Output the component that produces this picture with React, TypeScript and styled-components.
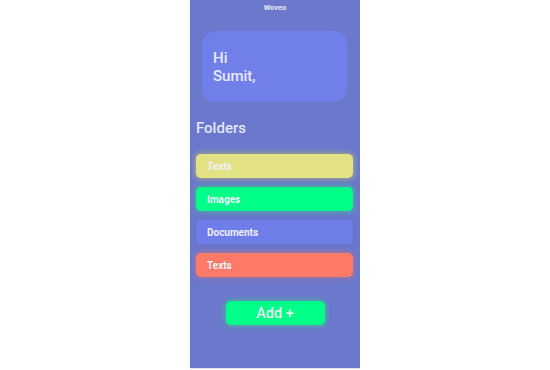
import React, { FC } from "react";
import styled, { createGlobalStyle } from "styled-components";

const GlobalStyle = createGlobalStyle`
    html, body {
        margin: 0;
        padding: 0;
        background: #ffffff;
        font-family: Roboto, "Liberation Sans", sans-serif;
    }
`;

const StyledPage = styled.div`
    display: flex;
    justify-content: center;
    width: 550px;
    height: 370px;
`;

const StyledPhone = styled.div`
    display: flex;
    flex-direction: column;
    width: 170px;
    height: 368px;
    background-color: #6b78cc;
    border-bottom: 1px solid #dfe2f5;
    box-sizing: content-box;
`;

const StyledTitle = styled.div`
    text-align: center;
    font-size: 7.5px;
    font-weight: 700;
    color: #e6e9fa;
    padding-top: 3px;
    height: 9px;
`;

const StyledGreeting = styled.div`
    margin: 19px 13px 0 12px;
    height: 71px;
    border-radius: 13px;
    background-color: #717fe9;
    padding: 18px 11px 0;
    box-sizing: border-box;
    font-size: 15px;
    font-weight: 500;
    line-height: 18px;
    color: #e8ebfb;
`;

const StyledHeading = styled.div`
    margin: 17px 0 0 6px;
    font-size: 15px;
    font-weight: 500;
    color: #e3e6fa;
    height: 20px;
`;

const StyledFolderList = styled.div`
    display: flex;
    flex-direction: column;
    gap: 9px;
    margin: 15px 7px 0 6px;
`;

const StyledFolder = styled.div<{ fill: string; glow: string }>`
    height: 24px;
    border-radius: 5px;
    background-color: ${props => props.fill};
    box-shadow: 0 0 4px 2px ${props => props.glow};
    display: flex;
    align-items: center;
    padding-left: 11px;
    font-size: 10px;
    font-weight: 700;
    color: #eef0fb;
`;

const StyledAddButton = styled.button`
    align-self: center;
    margin-top: 24px;
    width: 99px;
    height: 24px;
    border: none;
    border-radius: 5px;
    background-color: #00ff88;
    box-shadow: 0 0 4px 2px rgba(60, 200, 150, 0.55);
    font-family: inherit;
    font-size: 14.5px;
    font-weight: 500;
    color: #e9f4f2;
    padding: 0;
    cursor: pointer;
`;

const folders = [
    { name: "Texts", fill: "#e2e285", glow: "rgba(170, 175, 130, 0.7)" },
    { name: "Images", fill: "#00ff88", glow: "rgba(60, 190, 150, 0.6)" },
    { name: "Documents", fill: "#6f7de8", glow: "rgba(100, 110, 200, 0.6)" },
    { name: "Texts", fill: "#ff7a68", glow: "rgba(175, 115, 150, 0.7)" },
];

const App: FC = () => {
    return (
        <>
            <GlobalStyle />
            <StyledPage>
                <StyledPhone>
                    <StyledTitle>Woveo</StyledTitle>
                    <StyledGreeting>Hi<br />Sumit,</StyledGreeting>
                    <StyledHeading>Folders</StyledHeading>
                    <StyledFolderList>
                        {folders.map((f, id) => (
                            <StyledFolder key={id} fill={f.fill} glow={f.glow}>{f.name}</StyledFolder>
                        ))}
                    </StyledFolderList>
                    <StyledAddButton>Add +</StyledAddButton>
                </StyledPhone>
            </StyledPage>
        </>
    );
};

export default App;
